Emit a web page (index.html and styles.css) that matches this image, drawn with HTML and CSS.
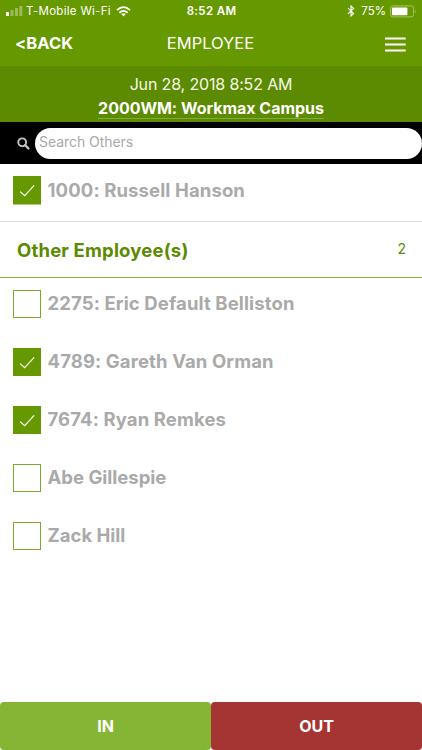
FILE: index.html
```html
<!DOCTYPE html>
<html lang="en">
<head>
<meta charset="utf-8">
<title>Employee</title>
<link rel="stylesheet" href="styles.css">
</head>
<body>
<div class="app">
  <header class="header">
    <div class="status">
      <div class="status-side">
        <svg class="signal" width="17" height="12" viewBox="0 0 17 12" fill="#fff"><rect x="0" y="7" width="3" height="4" rx=".6"/><g opacity=".35"><rect x="4.5" y="5" width="3" height="6" rx=".6"/><rect x="9" y="3" width="3" height="8" rx=".6"/><rect x="13.3" y="1" width="3" height="10" rx=".6"/></g></svg>
        <span class="carrier">T-Mobile Wi-Fi</span>
        <svg class="wifi" width="15" height="11" viewBox="0 0 15 11" fill="none" stroke="#fff" stroke-width="1.8"><path d="M1 4.1Q7.5-1.9 14 4.1"/><path d="M3.4 6.7Q7.5 3.1 11.6 6.7"/><path d="M5.3 8.1Q7.5 6.4 9.7 8.1L7.5 10.5Z" fill="#fff" stroke="none"/></svg>
      </div>
      <span class="clock">8:52 AM</span>
      <div class="status-side status-right">
        <svg class="bluetooth" width="8" height="12" viewBox="0 0 8 12" fill="none" stroke="#fff" stroke-width="1.1"><path d="M1 3.2L6.6 8.6L4 11V1L6.6 3.4L1 8.8"/></svg>
        <span class="percent">75%</span>
        <svg class="battery" width="27" height="13" viewBox="0 0 27 13"><rect x=".6" y=".9" width="23" height="11" rx="2.2" fill="none" stroke="#a4c56a"/><rect x="2" y="2.5" width="15.4" height="7.8" rx=".7" fill="#fff"/><path d="M25 4.5Q26.6 6.4 25 8.5Z" fill="#a4c56a"/></svg>
      </div>
    </div>
    <nav class="nav">
      <span class="back">&lt;BACK</span>
      <span class="title">EMPLOYEE</span>
      <svg class="menu" width="21" height="16" viewBox="0 0 21 16" fill="#fff"><path d="M0 .4h20.7v2H0zM0 6.5h20.7v2H0zM0 12.6h20.7v2H0z"/></svg>
    </nav>
  </header>
  <section class="info">
    <div class="date"><span>Jun 28, 2018 8:52 AM</span></div>
    <div class="site"><span>2000WM: Workmax Campus</span></div>
  </section>
  <section class="search">
    <svg class="glass" width="13" height="13" viewBox="0 0 13 13" fill="none" stroke="#c4c4c4"><circle cx="5.2" cy="5.3" r="3.9" stroke-width="1.9"/><path d="M8.1 8.2L11.4 11.5" stroke-width="2.4" stroke-linecap="round"/></svg>
    <div class="field"><span>Search Others</span></div>
  </section>
  <main class="list">
    <div class="row first"><svg class="box" viewBox="0 0 28 28"><rect width="28" height="28" fill="#690"/><path d="M7 15.3L11.5 19.4L20.8 9.2" fill="none" stroke="#fff" stroke-width="1.1"/></svg><span class="name">1000: Russell Hanson</span></div>
    <div class="group"><span class="group-title">Other Employee(s)</span><span class="count">2</span></div>
    <div class="row"><span class="box empty"></span><span class="name">2275: Eric Default Belliston</span></div>
    <div class="row"><svg class="box" viewBox="0 0 28 28"><rect width="28" height="28" fill="#690"/><path d="M7 15.3L11.5 19.4L20.8 9.2" fill="none" stroke="#fff" stroke-width="1.1"/></svg><span class="name">4789: Gareth Van Orman</span></div>
    <div class="row"><svg class="box" viewBox="0 0 28 28"><rect width="28" height="28" fill="#690"/><path d="M7 15.3L11.5 19.4L20.8 9.2" fill="none" stroke="#fff" stroke-width="1.1"/></svg><span class="name">7674: Ryan Remkes</span></div>
    <div class="row"><span class="box empty"></span><span class="name alpha">Abe Gillespie</span></div>
    <div class="row"><span class="box empty"></span><span class="name alpha">Zack Hill</span></div>
  </main>
  <footer class="actions">
    <div class="button in">IN</div>
    <div class="button out">OUT</div>
  </footer>
</div>
</body>
</html>
```
FILE: styles.css
```css
* { box-sizing: border-box; }
body { margin: 0; background: #fff; font-family: Inter, "Liberation Sans", sans-serif; }
.app { width: 422px; height: 750px; display: flex; flex-direction: column; overflow: hidden; white-space: nowrap; }
svg { display: block; flex: none; }

.header { height: 66px; background: #690; color: #fff; }
.status { height: 22px; display: grid; grid-template-columns: 1fr auto 1fr; align-items: center; padding: 0 5px 0 6px; font-size: 11.5px; line-height: 22px; }
.status-side { display: flex; align-items: center; }
.status-right { justify-content: flex-end; }
.carrier { margin: 0 5px 0 3px; letter-spacing: .3px; }
.clock { font-weight: 600; letter-spacing: .35px; }
.percent { margin: 0 4px 0 6px; }
.nav { height: 44px; display: grid; grid-template-columns: 1fr auto 1fr; align-items: center; padding: 0 16px 2px 15px; font-size: 16.5px; }
.back { font-weight: 700; letter-spacing: .1px; }
.title { letter-spacing: 0; }
.menu { justify-self: end; margin-top: 4px; }

.info { height: 56px; background: #5c8a00; color: #fff; text-align: center; padding-top: 6px; }
.date { font-size: 16px; line-height: 24px; letter-spacing: -.15px; color: #f5f9e9; }
.site { font-size: 16px; line-height: 20px; font-weight: 700; margin-top: 2px; letter-spacing: -.03px; }
.site span { display: inline-block; border-bottom: 1px solid #82ad32; }

.search { height: 42px; background: #000; display: flex; align-items: center; padding-left: 17px; }
.glass { margin: 1px 5px 0 0; }
.field { flex: 1; height: 31px; margin-top: 1px; border-radius: 16px; background: #fff; padding-left: 4px; color: #a9a9a9; font-size: 14px; line-height: 27px; letter-spacing: -.05px; }

.list { flex: 1; }
.row { height: 58px; display: flex; align-items: center; padding: 0 0 6px 12.5px; }
.row.first { border-bottom: 1px solid #ddd; padding-bottom: 4px; }
.box { width: 28.5px; height: 28.5px; flex: none; margin-right: 6.5px; }
.box.empty { border: 1px solid #7cab2b; }
.name { color: #aaa; font-size: 18.5px; line-height: 24px; font-weight: 650; letter-spacing: .12px; margin-top: -2px; }
.name.alpha { letter-spacing: 0; }
.group { height: 56px; display: flex; align-items: center; justify-content: space-between; padding: 0 16px 0 17px; border-bottom: 1px solid #82b33b; color: #5c8a00; }
.group-title { font-size: 18.5px; font-weight: 650; letter-spacing: .18px; }
.count { font-size: 14px; margin-top: -2px; }

.actions { height: 48px; display: flex; }
.button { flex: 1; border-radius: 4px; color: #fff; font-size: 16px; font-weight: 700; line-height: 49px; text-align: center; }
.in { background: #85b534; }
.out { background: #a53533; }
```
